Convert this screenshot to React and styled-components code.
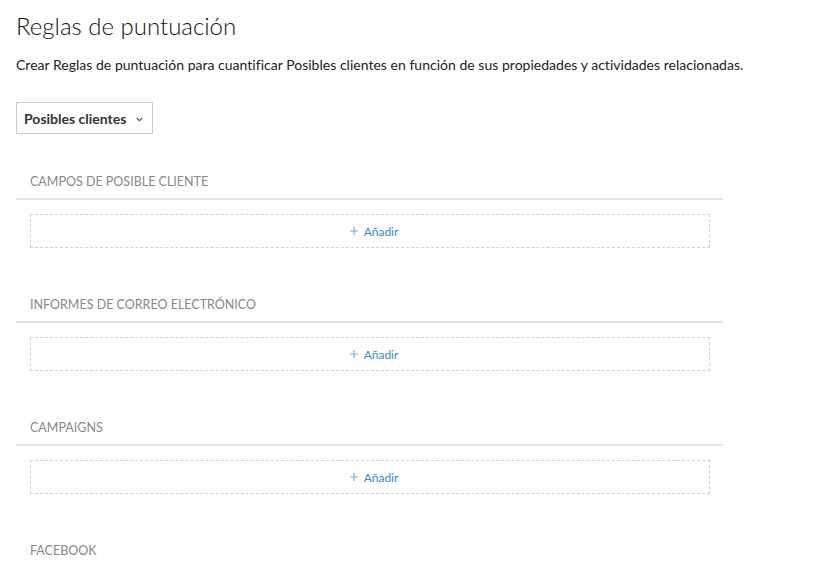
import React from "react";
import styled, { createGlobalStyle } from "styled-components";

const GlobalStyle = createGlobalStyle`
  html, body {
    margin: 0;
    padding: 0;
    background: #fff;
  }
  body {
    font-family: Lato, "Open Sans", Arial, sans-serif;
    color: #222;
  }
`;

// the screenshot is a scrolled viewport: anything below 565px is out of view
const Page = styled.div`
  padding: 11px 16px 0 16px;
  height: 565px;
  overflow: hidden;
  box-sizing: border-box;
`;

const Title = styled.h1`
  margin: 0;
  font-size: 24px;
  line-height: 29px;
  font-weight: 300;
  color: #111;
`;

const Description = styled.p`
  margin: 15px 0 0 0;
  font-size: 14px;
  line-height: 20px;
  letter-spacing: 0.02px;
  color: #222;
`;

const Select = styled.button`
  margin-top: 27px;
  display: inline-flex;
  align-items: center;
  gap: 10px;
  height: 32px;
  padding: 0 9px 0 7px;
  border: 1px solid #ccc;
  background: #fff;
  font-family: inherit;
  font-size: 14px;
  font-weight: 700;
  color: #333;
  cursor: pointer;
  box-sizing: border-box;
`;

const Chevron = styled.svg`
  width: 7px;
  height: 5px;
  margin-top: 3px;
`;

const Sections = styled.div`
  margin-top: 40px;
  width: 707px;
  display: flex;
  flex-direction: column;
  gap: 49px;
`;

const Section = styled.section`
  display: flex;
  flex-direction: column;
`;

const SectionHeader = styled.div`
  padding: 0 14px 8px 14px;
  font-size: 12.5px;
  line-height: 16px;
  color: #888;
  text-transform: uppercase;
  border-bottom: 2px solid #e2e2e2;
`;

const DropZone = styled.div`
  margin: 14px 13px 0 14px;
  height: 34px;
  border: 1px dashed #d2d2d2;
  box-sizing: border-box;
  display: flex;
  align-items: center;
  justify-content: center;
`;

const AddLink = styled.a`
  display: inline-flex;
  align-items: center;
  gap: 6px;
  margin-left: 8px;
  font-size: 12px;
  color: #3b86d4;
  text-decoration: none;
  cursor: pointer;
`;

const PlusIcon = styled.svg`
  width: 8px;
  height: 8px;
`;

// last section is only partly scrolled into view
const sections = [
  { name: "Campos de posible cliente", visible: true },
  { name: "Informes de correo electrónico", visible: true },
  { name: "Campaigns", visible: true },
  { name: "Facebook", visible: false },
];

export default function App() {
  return (
    <>
      <GlobalStyle />
      <Page>
        <Title>Reglas de puntuación</Title>
        <Description>
          Crear Reglas de puntuación para cuantificar Posibles clientes en función de sus propiedades y actividades relacionadas.
        </Description>
        <Select>
          Posibles clientes
          <Chevron viewBox="0 0 7 5">
            <path d="M0.8 1 L3.5 3.7 L6.2 1" fill="none" stroke="#555" strokeWidth="1.1" />
          </Chevron>
        </Select>
        <Sections>
          {sections.map((s) => (
            <Section key={s.name}>
              <SectionHeader>{s.name}</SectionHeader>
              {s.visible && (
                <DropZone>
                  <AddLink>
                    <PlusIcon viewBox="0 0 8 8">
                      <path d="M4 0 V8 M0 4 H8" stroke="#7aaee4" strokeWidth="1.2" />
                    </PlusIcon>
                    Añadir
                  </AddLink>
                </DropZone>
              )}
            </Section>
          ))}
        </Sections>
      </Page>
    </>
  );
}
